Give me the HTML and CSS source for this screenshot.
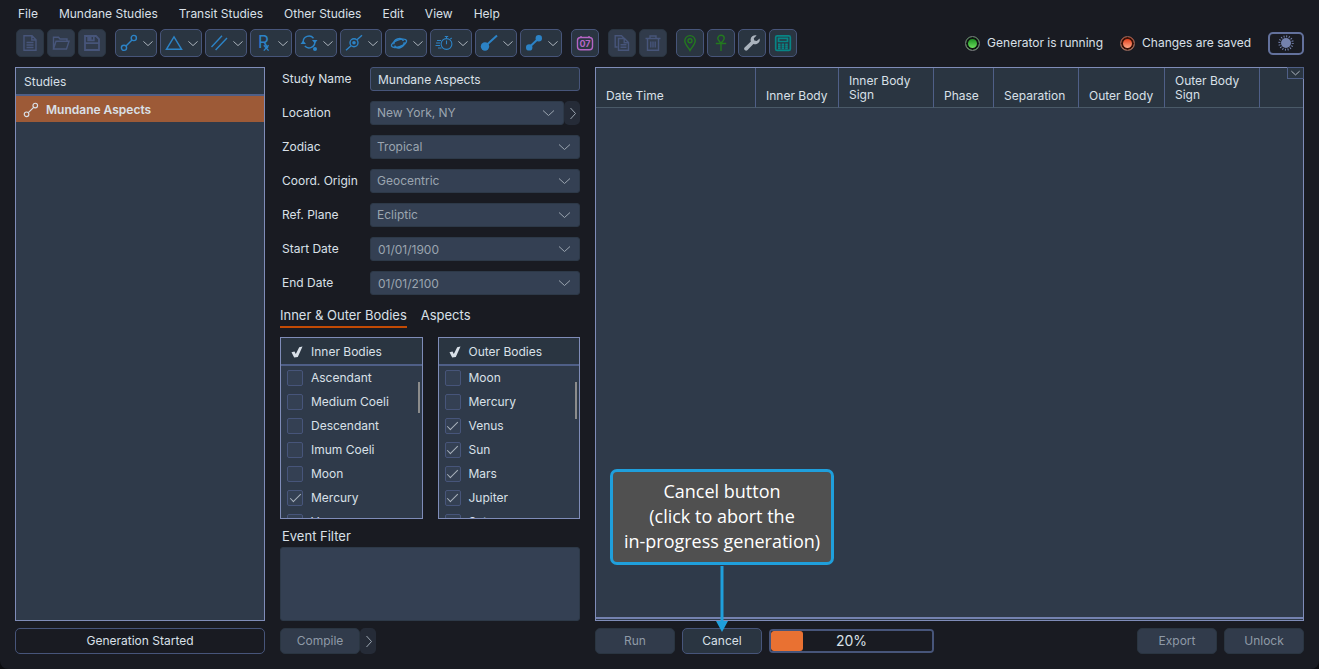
FILE: index.html
```html
<!DOCTYPE html>
<html lang="en">
<head>
    <meta charset="UTF-8">
    <meta name="viewport" content="width=device-width, initial-scale=1.0">
    <title>Mundane Aspects</title>

    <link rel="stylesheet" href="styles.css">
</head>
<body>

    <!-- shared shapes -->
    <svg class="shapes" aria-hidden="true">
        <symbol id="down" viewBox="0 0 12 8"><path d="M0.5 1.5 6 6.5 11.5 1.5"/></symbol>
        <symbol id="right" viewBox="0 0 8 12"><path d="M1.5 0.5 6.5 6 1.5 11.5"/></symbol>
        <symbol id="node" viewBox="0 0 18 18"><circle cx="4" cy="13.8" r="2.6"/><circle cx="13.8" cy="4" r="2.6"/><path d="M6 12 12 6"/></symbol>
        <symbol id="tick" viewBox="0 0 12 12"><path fill="currentColor" stroke="none" d="M0.5 6.2 3.5 5.6 4.8 8 8.2 1.2 11.5 0.5 6.8 11 3.2 11.5z"/></symbol>
    </svg>

    <!-- menu bar -->
    <nav class="menu">
        <button type="button">File</button>
        <button type="button">Mundane Studies</button>
        <button type="button">Transit Studies</button>
        <button type="button">Other Studies</button>
        <button type="button">Edit</button>
        <button type="button">View</button>
        <button type="button">Help</button>
    </nav>

    <!-- toolbar -->
    <div class="toolbar">
        <div class="group">
            <button type="button" class="tool" aria-label="New" disabled>
                <svg class="icon" viewBox="0 0 18 18"><path d="M3 1.8H11L15 5.8V16.2H3zM10.8 1.8V6H15M5.5 8.5H12.5M5.5 11H12.5M5.5 13.5H12.5"/></svg>
            </button>
            <button type="button" class="tool" aria-label="Open" disabled>
                <svg class="icon" viewBox="0 0 18 18"><path d="M1.5 15V3.2H6.5L8 5H15V7M1.5 15 4 7.2H17L14.5 15z"/></svg>
            </button>
            <button type="button" class="tool" aria-label="Save" disabled>
                <svg class="icon" viewBox="0 0 18 18"><path stroke-width="1.8" d="M2 2H13L16 5V16H2z M2 9.2H16"/><path d="M5 2H11V6.5H5z" fill="currentColor"/><path d="M9.3 3V5.5" stroke="#313b4b"/></svg>
            </button>
        </div>

        <div class="group blue">
            <button type="button" class="tool drop" aria-label="Mundane aspects">
                <svg class="icon"><use href="#node"/></svg>
                <svg class="arrow"><use href="#down"/></svg>
            </button>
            <button type="button" class="tool drop" aria-label="Patterns">
                <svg class="icon" viewBox="0 0 18 18"><path d="M9 2.8 16.6 15.3H1.4z"/></svg>
                <svg class="arrow"><use href="#down"/></svg>
            </button>
            <button type="button" class="tool drop" aria-label="Parallels">
                <svg class="icon" viewBox="0 0 18 18"><path d="M1.5 13 12 1.8M5.6 16 17 4"/></svg>
                <svg class="arrow"><use href="#down"/></svg>
            </button>
            <button type="button" class="tool drop" aria-label="Retrogrades">
                <svg class="icon" viewBox="0 0 18 18"><text x="3" y="14" font-size="17">R</text><path d="M8.8 11.2 13.6 16.6M13.6 11.2 8.8 16.6"/></svg>
                <svg class="arrow"><use href="#down"/></svg>
            </button>
            <button type="button" class="tool drop" aria-label="Returns">
                <svg class="icon" viewBox="0 0 18 18"><path d="M3.2 8A5.8 5.8 0 0 1 13.5 4.2M14.8 7.5A5.8 5.8 0 0 1 4.8 12"/><path fill="currentColor" stroke="none" d="M0.5 10 3.2 6.5 6 10zM12 6 17.5 6 14.8 9.5z"/><circle cx="15" cy="15" r="2" fill="currentColor" stroke="none"/></svg>
                <svg class="arrow"><use href="#down"/></svg>
            </button>
            <button type="button" class="tool drop" aria-label="Midpoints">
                <svg class="icon" viewBox="0 0 18 18"><circle cx="9" cy="8.7" r="4"/><circle cx="9" cy="8.7" r="1.8" fill="currentColor" stroke="none"/><path d="M1 16.3 6 11.8M12 5.7 17 1.3"/></svg>
                <svg class="arrow"><use href="#down"/></svg>
            </button>
            <button type="button" class="tool drop" aria-label="Planets">
                <svg class="icon" viewBox="0 0 18 18"><g transform="rotate(-20 9 9.3)"><ellipse cx="9" cy="9.3" rx="8" ry="3.4"/><path d="M4 8.5C4.5 3.5 13.5 3.5 14 8.5M4 10C4.5 15 13.5 15 14 10"/></g></svg>
                <svg class="arrow"><use href="#down"/></svg>
            </button>
            <button type="button" class="tool drop" aria-label="Speed">
                <svg class="icon thin" viewBox="0 0 18 18"><circle cx="11.5" cy="10" r="5.4"/><path d="M9.8 2.5H13.2M11.5 2.5V4.5M15.3 5.2 16.7 4M11.5 6.5V10.2M2 6.5H6M1 9H5M0.5 11.5H5M3 14H6.5"/></svg>
                <svg class="arrow"><use href="#down"/></svg>
            </button>
            <button type="button" class="tool drop" aria-label="Ingress">
                <svg class="icon bold" viewBox="0 0 18 18"><circle cx="5" cy="12.5" r="4.2" fill="currentColor" stroke="none"/><path d="M6 11.5 17 1.5"/></svg>
                <svg class="arrow"><use href="#down"/></svg>
            </button>
            <button type="button" class="tool drop" aria-label="Transit aspects">
                <svg class="icon bold" viewBox="0 0 18 18"><circle cx="4.2" cy="13.4" r="3.2" fill="currentColor" stroke="none"/><circle cx="13.8" cy="4.3" r="3.2" fill="currentColor" stroke="none"/><path d="M4.5 13 13.5 4.5"/></svg>
                <svg class="arrow"><use href="#down"/></svg>
            </button>
        </div>

        <div class="group">
            <button type="button" class="tool pink" aria-label="Calendar">
                <svg class="icon" viewBox="0 0 18 18"><rect x="1.5" y="3.5" width="15" height="12.3" rx="3"/><path d="M5 2V4M13 2V4"/><text x="9" y="13" font-size="9" font-weight="700" text-anchor="middle">07</text></svg>
            </button>
        </div>

        <div class="group">
            <button type="button" class="tool" aria-label="Copy" disabled>
                <svg class="icon" viewBox="0 0 18 18"><path d="M4.5 13H2.2V1.8H8.5L11 4.3M5.5 4.5H11.5L15.5 8.5V16.3H5.5zM11.2 4.5V8.7H15.5M7.5 10.8H13.5M7.5 13.3H13.5"/></svg>
            </button>
            <button type="button" class="tool" aria-label="Delete" disabled>
                <svg class="icon" viewBox="0 0 18 18"><path d="M1.5 4.5H16.5M6 4.3V2H12V4.3M3.5 4.5V16.3H14.5V4.5M6.8 7.5V13.5M9 7.5V13.5M11.2 7.5V13.5"/></svg>
            </button>
        </div>

        <div class="group">
            <button type="button" class="tool green" aria-label="Locations">
                <svg class="icon" viewBox="0 0 18 18"><path d="M9 16.5C7.5 13.5 3.8 10.5 3.8 6.8A5.2 5.2 0 0 1 14.2 6.8C14.2 10.5 10.5 13.5 9 16.5z"/><circle cx="9" cy="6.7" r="2"/></svg>
            </button>
            <button type="button" class="tool green" aria-label="Life events">
                <svg class="icon" viewBox="0 0 18 18"><path d="M9 9C6.5 6.5 5.8 5.3 5.8 4.2A3.2 2.9 0 0 1 12.2 4.2C12.2 5.3 11.5 6.5 9 9zM9 9V17M3.8 9.5H14.2"/></svg>
            </button>
            <button type="button" class="tool grey" aria-label="Settings">
                <svg class="icon" viewBox="0 0 18 18"><path fill="currentColor" stroke="none" d="M16.6 4.4 13.8 7.1 11.3 6.5 10.8 4.2 13.6 1.4C11.2 0.6 8 2.3 7.6 5.2 7.5 6 7.6 6.8 7.9 7.5L1.6 13.5C0.1 15 2.5 17.8 4.3 16.2L10.4 9.9C13.8 11.1 17.8 8.3 16.6 4.4z"/></svg>
            </button>
            <button type="button" class="tool teal" aria-label="Calculator">
                <svg class="icon heavy" viewBox="0 0 18 18"><rect x="1.7" y="1.8" width="14.6" height="14.6" rx="1.5"/><path d="M4.5 4.3H13.5V7.5H4.5z"/><path d="M4 10.3H14M4 12.4H14M4 14.4H14" stroke-dasharray="2.6 1"/></svg>
            </button>
        </div>

        <div class="status">
            <span class="led running"></span>
            <span>Generator is running</span>
            <span class="led saved"></span>
            <span>Changes are saved</span>
            <button type="button" class="theme" aria-label="Theme">
                <svg viewBox="0 0 18 18"><circle cx="9" cy="9" r="5" fill="currentColor"/><circle cx="9" cy="9" r="6.7" stroke="currentColor" stroke-width="2" stroke-dasharray="1 1.63"/></svg>
            </button>
        </div>
    </div>

    <main>
        <!-- studies list -->
        <section class="panel studies">
            <h2>Studies</h2>
            <ul>
                <li class="selected"><svg><use href="#node"/></svg>Mundane Aspects</li>
            </ul>
        </section>

        <!-- study form -->
        <form class="study">
            <div class="fields">
                <label for="name">Study Name</label>
                <input type="text" id="name" value="Mundane Aspects">

                <label for="location">Location</label>
                <div class="location">
                    <div class="picker">
                        <select id="location" disabled><option>New York, NY</option></select>
                        <svg><use href="#down"/></svg>
                    </div>
                    <button type="button" class="more" aria-label="More locations" disabled><svg><use href="#right"/></svg></button>
                </div>

                <label for="zodiac">Zodiac</label>
                <div class="picker">
                    <select id="zodiac" disabled><option>Tropical</option></select>
                    <svg><use href="#down"/></svg>
                </div>

                <label for="origin">Coord. Origin</label>
                <div class="picker">
                    <select id="origin" disabled><option>Geocentric</option></select>
                    <svg><use href="#down"/></svg>
                </div>

                <label for="plane">Ref. Plane</label>
                <div class="picker">
                    <select id="plane" disabled><option>Ecliptic</option></select>
                    <svg><use href="#down"/></svg>
                </div>

                <label for="start">Start Date</label>
                <div class="picker">
                    <input type="text" id="start" value="01/01/1900" disabled>
                    <svg><use href="#down"/></svg>
                </div>

                <label for="end">End Date</label>
                <div class="picker">
                    <input type="text" id="end" value="01/01/2100" disabled>
                    <svg><use href="#down"/></svg>
                </div>
            </div>

            <div class="tabs">
                <button type="button" class="active">Inner &amp; Outer Bodies</button>
                <button type="button">Aspects</button>
            </div>

            <div class="bodies">
                <div class="panel list">
                    <h3><svg><use href="#tick"/></svg>Inner Bodies</h3>
                    <div class="rows">
                        <label><input type="checkbox" disabled>Ascendant</label>
                        <label><input type="checkbox" disabled>Medium Coeli</label>
                        <label><input type="checkbox" disabled>Descendant</label>
                        <label><input type="checkbox" disabled>Imum Coeli</label>
                        <label><input type="checkbox" disabled>Moon</label>
                        <label><input type="checkbox" checked disabled>Mercury</label>
                        <label><input type="checkbox" disabled>Venus</label>
                        <span class="thumb"></span>
                    </div>
                </div>
                <div class="panel list">
                    <h3><svg><use href="#tick"/></svg>Outer Bodies</h3>
                    <div class="rows">
                        <label><input type="checkbox" disabled>Moon</label>
                        <label><input type="checkbox" disabled>Mercury</label>
                        <label><input type="checkbox" checked disabled>Venus</label>
                        <label><input type="checkbox" checked disabled>Sun</label>
                        <label><input type="checkbox" checked disabled>Mars</label>
                        <label><input type="checkbox" checked disabled>Jupiter</label>
                        <label><input type="checkbox" disabled>Saturn</label>
                        <span class="thumb long"></span>
                    </div>
                </div>
            </div>

            <label class="filter-label" for="filter">Event Filter</label>
            <textarea id="filter" disabled></textarea>
        </form>

        <!-- results -->
        <section class="panel results">
            <table>
                <colgroup>
                    <col class="w-date"><col class="w-inner"><col class="w-sign"><col class="w-phase">
                    <col class="w-sep"><col class="w-outer"><col class="w-sign"><col>
                </colgroup>
                <thead>
                    <tr>
                        <th>Date Time</th>
                        <th>Inner Body</th>
                        <th class="two">Inner Body Sign</th>
                        <th>Phase</th>
                        <th>Separation</th>
                        <th>Outer Body</th>
                        <th class="two">Outer Body Sign</th>
                        <th></th>
                    </tr>
                </thead>
            </table>
            <button type="button" class="columns" aria-label="Columns"><svg><use href="#down"/></svg></button>
        </section>
    </main>

    <!-- bottom buttons -->
    <footer>
        <output class="message">Generation Started</output>

        <div class="compile">
            <button type="button" class="btn" disabled>Compile</button>
            <button type="button" class="more" aria-label="Compile options" disabled><svg><use href="#right"/></svg></button>
        </div>

        <div class="actions">
            <button type="button" class="btn" disabled>Run</button>
            <div class="cancel">
                <button type="button" class="btn">Cancel</button>
                <div class="callout">Cancel button<br>(click to abort the<br>in-progress generation)</div>
                <svg class="pointer" viewBox="0 0 12 66"><path d="M4.5 0H7.5V55H12L6 66 0 55H4.5z"/></svg>
            </div>
            <div class="progress">
                <progress value="20" max="100" aria-label="Progress"></progress>
                <span>20%</span>
            </div>
            <button type="button" class="btn export" disabled>Export</button>
            <button type="button" class="btn" disabled>Unlock</button>
        </div>
    </footer>

</body>
</html>
```
FILE: styles.css
```css
*{
    margin: 0;
    padding: 0;
    box-sizing: border-box;
}
html{
    background: #0c0d10;
}
body{
    display: flex;
    flex-direction: column;
    height: 100vh;
    min-height: 640px;
    padding: 0 15px 15px;
    background: #191b22;
    color: #d9e0e8;
    font: 12px/16px Inter, "Liberation Sans", sans-serif;
    border-radius: 0 0 8px 8px;
}
button, input, select, textarea{
    font: inherit;
    color: inherit;
}
button{
    background: none;
    border: none;
}
svg{
    display: block;
    flex: none;
    fill: none;
    stroke: currentColor;
}
.shapes{
    position: absolute;
    width: 0;
    height: 0;
}

/* menu bar */
.menu{
    display: flex;
    gap: 21px;
    padding: 6px 3px 7px;
}

/* toolbar */
.toolbar{
    display: flex;
    gap: 9px;
    padding-left: 1px;
    margin-bottom: 10px;
}
.group{
    display: flex;
    gap: 3px;
}
.tool{
    display: flex;
    align-items: center;
    justify-content: center;
    width: 28px;
    height: 28px;
    background: #2a3541;
    border: 1px solid #47557a;
    border-radius: 5px;
}
.tool:disabled{
    background: #313b4b;
    border-color: #2a3541;
    color: #47557a;
}
.drop{
    width: 42px;
    gap: 5px;
}
.icon{
    width: 18px;
    height: 18px;
    stroke-width: 1.4;
    overflow: visible;
}
.icon text{
    fill: currentColor;
    stroke: none;
}
.thin{
    stroke-width: 1.1;
}
.heavy{
    stroke-width: 1.7;
}
.bold{
    stroke-width: 2;
}
.arrow{
    width: 10px;
    height: 7px;
    color: #c3cad3;
}
.blue{
    color: #2c83c6;
}
.pink{
    color: #b565c4;
}
.green{
    color: #23791f;
}
.grey{
    color: #aab3bd;
}
.teal{
    color: #078585;
}

/* status lights */
.status{
    display: flex;
    align-items: center;
    gap: 7px;
    margin-left: auto;
}
.led{
    width: 15px;
    height: 15px;
    border: 1px solid #777b7d;
    border-radius: 50%;
}
.running{
    background: linear-gradient(#1c8f22 2px, #6be05c 11px);
    box-shadow: inset 0 0 0 2px #101413;
}
.saved{
    margin-left: 10px;
    border-color: #93665a;
    background: linear-gradient(#e5401c 2px, #ffa888 11px);
    box-shadow: inset 0 0 0 2px #3a1208;
}
.theme{
    display: flex;
    align-items: center;
    justify-content: center;
    width: 36px;
    height: 23px;
    margin-left: 10px;
    border: 2px solid #63719c;
    border-radius: 5px;
    color: #7482ae;
}
.theme svg{
    width: 18px;
    height: 18px;
    stroke: none;
}

/* columns */
main, footer{
    display: grid;
    grid-template-columns: 250px 300px 1fr;
    column-gap: 15px;
}
main{
    flex: 1;
    min-height: 0;
    grid-template-rows: minmax(0, 1fr);
}
.panel{
    background: #2f3a4a;
    border: 1px solid #7f8cb8;
}
h2, h3{
    height: 28px;
    font-size: 12px;
    font-weight: 400;
    background: #2a3541;
    border-bottom: 2px solid #4f5f87;
}
h2{
    padding: 6px 8px 4px;
}
.studies li{
    display: flex;
    align-items: center;
    gap: 7px;
    height: 26px;
    padding: 2px 0 0 7px;
    list-style: none;
}
.studies svg{
    width: 16px;
    height: 16px;
    stroke-width: 1.3;
}
.selected{
    background: #9d5a37;
    font-weight: 600;
}

/* study form */
.study{
    display: flex;
    flex-direction: column;
    min-height: 0;
}
.fields{
    display: grid;
    grid-template-columns: 90px 1fr;
    row-gap: 10px;
}
.fields label{
    padding: 4px 2px;
}
.fields input, .fields select{
    display: block;
    width: 100%;
    height: 24px;
    padding: 0 7px;
    background: #2a3541;
    border: 1px solid #47557a;
    border-radius: 3px;
    appearance: none;
}
.fields input:disabled, .fields select:disabled, textarea:disabled{
    background: #344053;
    border-color: #2d3948;
    color: #9ba5b0;
    opacity: 1;
}
.fields select{
    padding: 0 6px;
}
.picker{
    position: relative;
    flex: 1;
}
.picker svg{
    position: absolute;
    top: 8px;
    right: 9px;
    width: 13px;
    height: 8px;
    color: #9ba5b0;
}
.location, .compile{
    display: flex;
}
.more{
    display: flex;
    align-items: center;
    justify-content: center;
    width: 16px;
    padding-left: 1px;
    background: #252b37;
    border-radius: 5px;
    color: #9ba5b0;
}
.more svg{
    width: 8px;
    height: 13px;
}
.tabs{
    display: flex;
    gap: 14px;
    margin: 12px 0 9px;
    font-size: 13px;
}
.tabs button{
    height: 21px;
    padding-bottom: 3px;
    border-bottom: 2px solid transparent;
}
.tabs .active{
    border-color: #c24a04;
}
.bodies{
    display: grid;
    grid-template-columns: 1fr 1fr;
    grid-template-rows: minmax(0, 1fr);
    column-gap: 15px;
    flex: 1;
    min-height: 0;
}
.list{
    display: flex;
    flex-direction: column;
    min-height: 0;
}
h3{
    display: flex;
    align-items: center;
    gap: 8px;
    padding: 1px 0 0 10px;
}
h3 svg{
    width: 12px;
    height: 12px;
}
.rows{
    position: relative;
    flex: 1;
    min-height: 0;
    overflow: hidden;
}
.rows label{
    display: flex;
    align-items: center;
    gap: 8px;
    height: 24px;
    padding-left: 6px;
}
.rows input{
    display: grid;
    place-items: center;
    width: 16px;
    height: 16px;
    background: #344053;
    border: 1px solid #47557a;
    border-radius: 2px;
    appearance: none;
}
.rows input:checked::before{
    content: '';
    width: 10px;
    height: 4px;
    margin-bottom: 3px;
    border: solid #a9b2bc;
    border-width: 0 0 1px 1px;
    transform: rotate(-45deg);
}
.thumb{
    position: absolute;
    top: 16px;
    right: 2px;
    width: 2px;
    height: 31px;
    background: #8c8c8c;
}
.long{
    height: 37px;
}
.filter-label{
    padding: 9px 2px 3px;
    font-size: 13px;
}
textarea{
    height: 74px;
    border: 1px solid;
    border-radius: 3px;
    resize: none;
}

/* results table */
.results{
    position: relative;
    box-shadow: inset 0 -1px #2f3a4a, inset 0 -3px #7482b0;
}
table{
    width: 100%;
    table-layout: fixed;
    border-spacing: 0;
}
th{
    height: 40px;
    padding: 0 10px 4px;
    background: #2a3541;
    border-right: 1px solid #4f5f87;
    border-bottom: 1px solid #4a5a68;
    font-weight: 400;
    line-height: 14px;
    text-align: left;
    vertical-align: bottom;
    white-space: nowrap;
}
th:last-child{
    border-right: none;
}
.two{
    padding-bottom: 5px;
    white-space: normal;
}
.w-date{ width: 160px; }
.w-inner{ width: 83px; }
.w-sign{ width: 95px; }
.w-phase{ width: 60px; }
.w-sep{ width: 85px; }
.w-outer{ width: 86px; }
.columns{
    display: flex;
    align-items: center;
    justify-content: center;
    position: absolute;
    top: -1px;
    right: -1px;
    width: 17px;
    height: 12px;
    background: #2a3541;
    border: 1px solid #4f5f87;
}
.columns svg{
    width: 9px;
    height: 6px;
}

/* bottom buttons */
footer{
    margin-top: 7px;
}
.message{
    height: 26px;
    padding-top: 4px;
    border: 1px solid #47557a;
    border-radius: 5px;
    text-align: center;
}
.actions{
    display: flex;
    align-items: center;
    gap: 7px;
}
.btn{
    display: block;
    width: 80px;
    height: 26px;
    background: #2a3541;
    border: 1px solid #47557a;
    border-radius: 5px;
}
.btn:disabled{
    background: #313b4b;
    border-color: #2a3541;
    color: #8f9aa7;
}
.cancel, .progress{
    position: relative;
}
.callout{
    position: absolute;
    bottom: 89px;
    left: 50%;
    transform: translateX(-50%);
    width: 224px;
    padding: 7px 0 8px;
    background: #505050;
    border: 3px solid #1f9fdc;
    border-radius: 7px;
    color: #fff;
    font: 18px/25px "Open Sans", "Noto Sans", sans-serif;
    text-align: center;
    white-space: nowrap;
}
.pointer{
    position: absolute;
    bottom: 22px;
    left: 34px;
    width: 12px;
    height: 66px;
    fill: #1f9fdc;
    stroke: none;
}
.progress, progress{
    display: block;
    width: 165px;
    height: 24px;
}
progress{
    border: 2px solid #47557a;
    border-radius: 4px;
    overflow: hidden;
    appearance: none;
}
progress::-webkit-progress-bar{
    background: #191b22;
}
progress::-webkit-progress-value{
    background: #e97132;
    border-radius: 3px;
}
.progress span{
    position: absolute;
    top: 4px;
    left: 0;
    width: 100%;
    font-size: 14px;
    text-align: center;
}
.export{
    margin-left: auto;
}
```
